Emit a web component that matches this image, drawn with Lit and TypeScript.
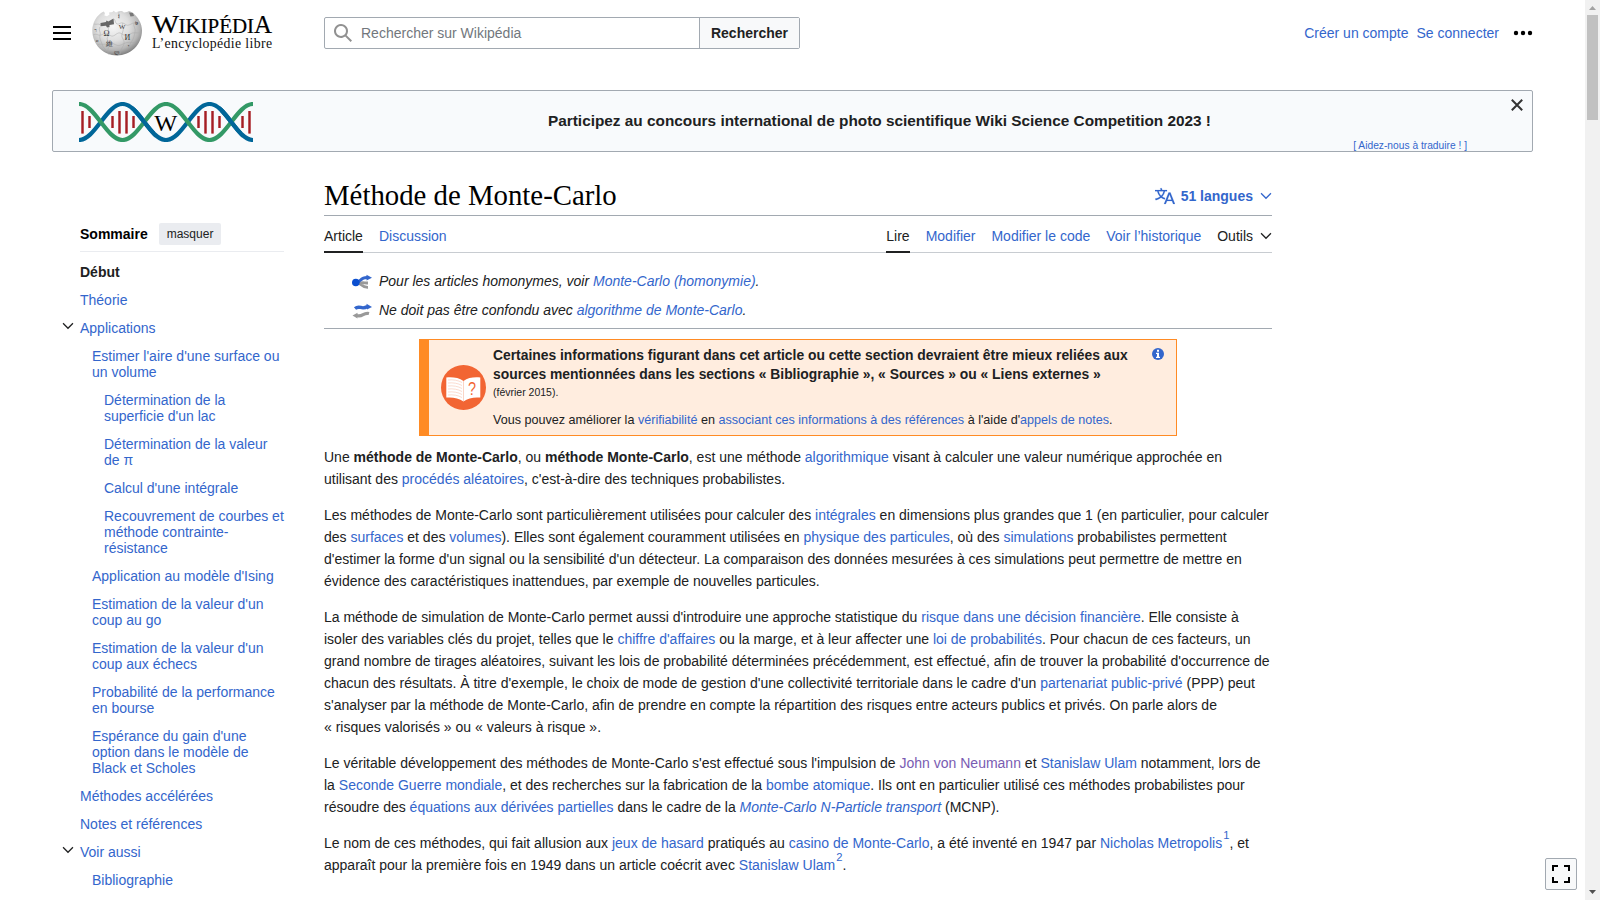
import { LitElement, html, css, svg } from "lit";
import { customElement } from "lit/decorators.js";
import { classMap } from "lit/directives/class-map.js";

type TocEntry = { label: string; level: number; open?: boolean; current?: boolean };

const TOC: TocEntry[] = [
  { label: "Début", level: 1, current: true },
  { label: "Théorie", level: 1 },
  { label: "Applications", level: 1, open: true },
  { label: "Estimer l'aire d'une surface ou un volume", level: 2 },
  { label: "Détermination de la superficie d'un lac", level: 3 },
  { label: "Détermination de la valeur de π", level: 3 },
  { label: "Calcul d'une intégrale", level: 3 },
  { label: "Recouvrement de courbes et méthode contrainte-résistance", level: 3 },
  { label: "Application au modèle d'Ising", level: 2 },
  { label: "Estimation de la valeur d'un coup au go", level: 2 },
  { label: "Estimation de la valeur d'un coup aux échecs", level: 2 },
  { label: "Probabilité de la performance en bourse", level: 2 },
  { label: "Espérance du gain d'une option dans le modèle de Black et Scholes", level: 2 },
  { label: "Méthodes accélérées", level: 1 },
  { label: "Notes et références", level: 1 },
  { label: "Voir aussi", level: 1, open: true },
  { label: "Bibliographie", level: 2 },
];

const chevron = html`<svg class="chev" viewBox="0 0 20 20" width="12" height="12">
  <path d="M17.5 4.75l-7.5 7.5-7.5-7.5L1 6.25l9 9 9-9z" fill="currentColor" /></svg>`;

const globe = html`<svg class="globe" viewBox="0 0 50 46" width="50" height="46">
  <defs>
    <radialGradient id="ball" cx="0.42" cy="0.35" r="0.65">
      <stop offset="0" stop-color="#f6f6f6" /><stop offset="0.5" stop-color="#dedede" />
      <stop offset="0.82" stop-color="#b5b5b5" /><stop offset="1" stop-color="#858585" />
    </radialGradient>
  </defs>
  <path d="M11.5 1.5 L13 3 L12.4 5.5 L15 6.3 L17.5 4.6 L17 2.6 L20.5 2 L21.5 0.8 L24 2.6 L27 1 L30 .9 L32 2.4 L35 2 L37 1 L40 2.2
    C46 6.500 50 13.500 50 20.500 C50 34.600 38.900 45.400 25 45.400 C11.100 45.400 .3 34.600 .3 20.500 C.3 12.500 4.500 5.200 11.500 1.500 Z" fill="url(#ball)" />
  <path d="M8.500 13 L14 12 L14.500 10.500 L16.300 11.500 L21.500 8.500 L22 14.200 L17.500 15 L17.500 17 L15 17.500 L14 15.700 L8.500 16.300 Z" fill="#666" />
  <path d="M37 2.500 L41 3 L42 6 L38.500 6.500 Z" fill="#777" />
  <g fill="none" stroke="#a8a8a8" stroke-width=".5">
    <path d="M2 14c3 1 4-1 6.500 1M22 9c2 2 1 4 3 5s3-2 6-1 3 3 6 2 4-3 8-2M1 25c4-2 5 1 8 0s4-3 7-1 4 3 7 1 4-3 7-1 5 2 8 0 6-1 10-1M5 35c4-2 5 0 9-1s4-2 8 0 5 2 9 0 6-2 12-1" />
    <path d="M17 17c-2 3 1 4 0 7s-3 4-1 7 1 5 0 8 1 4 1 6M31 13c-2 3 1 5 0 8s-2 5 0 8 1 6-1 9-1 4-2 6M42 13c-1 4 2 5 1 9s-1 6-3 9-2 4-3 7M8 17c-2 3 1 5 0 8s1 6 2 9 2 4 4 6M27 2c-1 3 1 4 0 7" />
  </g>
  <g fill="#333" font-family="Liberation Serif, serif" text-anchor="middle">
    <text x="14.500" y="25.500" font-size="8">Ω</text><text x="30" y="18.500" font-size="7">W</text>
    <text x="35.500" y="29.500" font-size="8">И</text><text x="17.500" y="35.500" font-size="7">維</text>
    <text x="36.500" y="38" font-size="6">י</text><text x="44" y="15" font-size="6">७</text>
    <text x="3.500" y="22" font-size="5">ר</text><text x="5" y="32" font-size="5">и</text>
    <text x="27" y="8" font-size="5">វ</text><text x="24" y="44" font-size="5">ლ</text>
  </g>
</svg>`;

const wordmark = html`<svg class="wordmark" viewBox="0 0 122 42" width="122" height="42">
  <g fill="#000" font-family="Liberation Serif, serif">
    <g stroke="#000" stroke-width=".2">
      <text x="0" y="20.500" font-size="26" textLength="27" lengthAdjust="spacingAndGlyphs">W</text>
      <text x="26.500" y="20.500" font-size="20" textLength="75.500" lengthAdjust="spacingAndGlyphs">IKIPÉDI</text>
      <text x="102" y="20.500" font-size="26" textLength="18" lengthAdjust="spacingAndGlyphs">A</text>
    </g>
    <text x="0" y="36" font-size="13.800" fill="#111" textLength="120" lengthAdjust="spacing">L’encyclopédie libre</text>
  </g>
</svg>`;

const WAVE_DOWN = "M0 2C16 2 27.500 38 43.500 38S71 2 87 2S114.500 38 130.500 38S158 2 174 2";
const WAVE_UP = "M0 38C16 38 27.500 2 43.500 2S71 38 87 38S114.500 2 130.500 2S158 38 174 38";
const RUNGS: [number, boolean][] = [
  [3.5, true], [10.5, false], [33.5, false], [40.5, true], [47.5, true], [54.5, false],
  [119.5, false], [126.5, true], [133.5, true], [140.5, false], [163.5, false], [170.5, true],
];
const dna = html`<svg class="dna" viewBox="0 0 174 40" width="174" height="40">
  <defs><clipPath id="over"><rect x="54" y="0" width="22" height="40" /><rect x="141" y="0" width="22" height="40" /></clipPath></defs>
  ${RUNGS.map(([x, tall]) => svg`<rect x=${x - 1.5} y=${tall ? 9 : 14} width="3" height=${tall ? 22.5 : 12} fill="#d9979b" />
    <rect x=${x - 1} y=${tall ? 9 : 14} width="2" height=${tall ? 22.5 : 12} fill="#a31f25" />`)}
  <g fill="none" stroke-width="4.2">
    <path d=${WAVE_UP} stroke="#069" /><path d=${WAVE_DOWN} stroke="#396" />
    <path d=${WAVE_UP} stroke="#069" clip-path="url(#over)" />
  </g>
  <text x="75.300" y="28.500" font-size="24" textLength="23" lengthAdjust="spacingAndGlyphs" font-family="Liberation Serif, serif">W</text>
</svg>`;

const book = html`<svg class="book" viewBox="0 0 45 45" width="45" height="45">
  <circle cx="22.500" cy="22.500" r="22.500" fill="#f26533" />
  <path d="M5.300 12.500C11 12 18 12.500 22.500 16C27 12.500 33 12 39.300 12.500V32.600C33 32 27 33 22.500 36.500C18 33 11 32 5.300 32.600Z" fill="#fff" />
  <path d="M22.500 16V36" stroke="#f6b8a0" stroke-width=".6" />
  <g fill="none" stroke="#f9cdbb" stroke-width=".7">
    <path d="M7 15c5-.5 10 .2 14 2.500M7 18c5-.5 10 .2 14 2.500M7 21c5-.5 10 .2 14 2.500M7 24c5-.5 10 .2 14 2.500M7 27c5-.5 10 .2 14 2.500M7 30c5-.5 10 .2 14 2.500" />
  </g>
  <text x="31" y="29.500" text-anchor="middle" font-size="18" fill="#f26533" font-family="Liberation Sans, sans-serif" textLength="8" lengthAdjust="spacingAndGlyphs">?</text>
</svg>`;

@customElement("app-root")
export class AppRoot extends LitElement {
  static styles = css`
    :host { display: flex; height: 900px; overflow: hidden; position: relative; background: #fff;
      font-family: "Liberation Sans", Arial, sans-serif; font-size: 14px; line-height: 22px; color: #202122; }
    * { box-sizing: border-box; }
    svg { display: block; flex: none; }
    a { color: #36c; text-decoration: none; }
    .visited { color: #795cb2; }
    .page { flex: 1; min-width: 0; padding: 0 52px; overflow: hidden; }
    .header { height: 66px; display: flex; align-items: center; }
    .brand { width: 272px; display: flex; align-items: center; }
    .menu { margin: 0 21px 0 1px; }
    .globe { margin-right: 10px; }
    .wordmark { overflow: visible; }
    .search { display: flex; width: 476px; height: 32px; border: 1px solid #a2a9b1; border-radius: 2px; color: #72777d; }
    .field { flex: 1; display: flex; align-items: center; gap: 8px; padding-left: 8px; }
    .go { width: 100px; border-left: 1px solid #a2a9b1; background: #f8f9fa; color: #202122; font-weight: bold;
      display: flex; align-items: center; justify-content: center; }
    .personal { margin-left: auto; display: flex; align-items: center; gap: 8px; }
    .dots { margin-left: 6px; }
    .banner { height: 62px; margin-top: 24px; border: 1px solid #a2a9b1; border-radius: 2px; background: #f8fafc;
      position: relative; display: flex; align-items: center; }
    .dna { margin: 2px 0 0 26px; }
    .slogan { flex: 1; text-align: center; font-size: 15.36px; font-weight: bold; margin-right: 26px; }
    .translate { position: absolute; right: 65px; bottom: -6px; font-size: 10.24px; }
    .close { position: absolute; right: 9px; top: 8px; }
    .columns { display: flex; }
    .toc { width: 272px; padding: 71px 40px 0 28px; line-height: 16px; }
    .tochead { display: flex; align-items: center; height: 22px; color: #000; font-weight: bold; }
    .hide { margin-left: 11px; height: 22px; padding: 3px 8px; background: #eaecf0; border-radius: 2px; font-size: 12px;
      font-weight: normal; color: #202122; }
    .rule { border-top: 1px solid #eaecf0; margin: 6px 0 6px; }
    .item { padding: 6px 0; display: flex; }
    .item .chev { margin: 0 6px 0 -18px; color: #202122; }
    .l2 { padding-left: 12px; }
    .l3 { padding-left: 24px; }
    .current { color: #202122; font-weight: bold; }
    .main { width: 948px; }
    .titlebar { height: 64px; border-bottom: 1px solid #a2a9b1; display: flex; align-items: flex-end; justify-content: space-between; }
    h1 { margin: 0; font: normal 28.8px/36px "Liberation Serif", serif; color: #000; padding-bottom: 2px; }
    .langs { display: flex; align-items: center; color: #36c; font-weight: bold; padding-bottom: 8px; }
    .langs .chev { margin-left: 7px; }
    .langs svg:first-child { margin-right: 6px; }
    .tabs { height: 37px; border-bottom: 1px solid #c8ccd1; display: flex; gap: 16px; }
    .tab { height: 37px; padding-top: 9px; display: flex; }
    .on { border-bottom: 2px solid #202122; color: #202122; }
    .push { margin-left: auto; }
    .tools { color: #202122; }
    .tools .chev { margin: 5px 0 0 7px; }
    .hatnotes { padding-top: 13px; border-bottom: 1px solid #a2a9b1; height: 76px; font-style: italic; }
    .hat { display: flex; align-items: center; height: 29px; padding-left: 28px; gap: 7px; }
    .hat svg { margin-top: 2px; }
    .notice { margin: 10px 0 0 95px; width: 758px; height: 97px; border: 1px solid #ff8b24; border-left-width: 10px;
      background: #ffeddf; display: flex; align-items: center; padding-left: 12px; }
    .body { margin-left: 7px; width: 645px; height: 95px; padding-top: 6px; font-size: 12.6px; line-height: 19px; }
    .strong { font-size: 13.86px; font-weight: bold; }
    .date { font-size: 10.5px; line-height: 16px; }
    .improve { margin-top: 11px; }
    .info { align-self: flex-start; margin: 8px 0 0 14px; }
    p { margin: 0 0 14px; }
    .prose { padding-top: 10px; }
    .prose sup { font-size: 11.2px; line-height: 0; vertical-align: 9px; padding-left: 1px; }
    .expand { position: absolute; left: 1545px; top: 858px; width: 32px; height: 32px; border: 1px solid #a2a9b1; border-radius: 2px;
      background: #f8f9fa; padding: 6px; }
    .scroll { width: 15px; background: #f1f1f1; display: flex; flex-direction: column; }
    .thumb { margin: 0 2px; height: 105px; background: #c1c1c1; }
    .scroll svg:last-child { margin-top: auto; }
  `;

  render() {
    return html`
      <div class="page">
        <header class="header">
          <div class="brand">
            <svg class="menu" viewBox="0 0 18 14" width="18" height="14"><path d="M0 0h18v2H0zM0 6h18v2H0zM0 12h18v2H0z" /></svg>
            ${globe}${wordmark}
          </div>
          <div class="search">
            <div class="field">
              <svg viewBox="0 0 20 20" width="20" height="20"><path fill="#919191" d="M12.200 13.600a7 7 0 1 1 1.400-1.400l5.400 5.400-1.400 1.400zM3 8a5 5 0 1 0 10 0A5 5 0 0 0 3 8z" /></svg>
              <span>Rechercher sur Wikipédia</span>
            </div>
            <div class="go">Rechercher</div>
          </div>
          <nav class="personal">
            <a>Créer un compte</a><a>Se connecter</a>
            <svg class="dots" viewBox="0 0 20 20" width="20" height="20"><circle cx="3" cy="10" r="2.200" /><circle cx="10" cy="10" r="2.200" /><circle cx="17" cy="10" r="2.200" /></svg>
          </nav>
        </header>
        <section class="banner">
          ${dna}
          <div class="slogan">Participez au concours international de photo scientifique Wiki Science Competition 2023 !</div>
          <a class="translate">[ Aidez-nous à traduire ! ]</a>
          <svg class="close" viewBox="0 0 12 12" width="12" height="12"><path d="M.8.8l10.400 10.400M11.200.8L.8 11.200" stroke="#333" stroke-width="2" /></svg>
        </section>
        <div class="columns">
          <aside class="toc">
            <div class="tochead">Sommaire<span class="hide">masquer</span></div>
            <div class="rule"></div>
            ${TOC.map((t) => html`<div class=${classMap({ item: true, l2: t.level === 2, l3: t.level === 3 })}>
              ${t.open ? chevron : ""}<a class=${classMap({ current: !!t.current })}>${t.label}</a></div>`)}
          </aside>
          <main class="main">
            <div class="titlebar">
              <h1>Méthode de Monte-Carlo</h1>
              <div class="langs">
                <svg viewBox="0 0 20 20" width="20" height="20"><path fill="#36c" stroke="#36c" stroke-width=".15" d="M20 18h-1.440a.61.61 0 0 1-.4-.12.81.81 0 0 1-.23-.31L17 15h-5l-1 2.540a.77.77 0 0 1-.22.3.59.59 0 0 1-.4.14H9l4.550-11.470h1.890zm-3.530-4.310L14.890 9.500a11.620 11.620 0 0 1-.39-1.240q-.09.37-.19.69l-.19.56-1.580 4.190zm-6.300-1.580a13.430 13.430 0 0 1-2.910-1.410 11.460 11.460 0 0 0 2.810-5.370H12V4H7.310a4 4 0 0 0-.2-.56C6.870 2.790 6.600 2 6.600 2l-1.470.5s.4.89.6 1.500H0v1.330h2.150A11.230 11.230 0 0 0 5 10.700a17.190 17.190 0 0 1-5 2.100q.56.82.87 1.380a23.280 23.280 0 0 0 5.220-2.510 15.640 15.640 0 0 0 3.560 1.770zM3.630 5.330h4.910a8.110 8.110 0 0 1-2.450 4.450 9.110 9.110 0 0 1-2.460-4.450z" /></svg>
                51 langues${chevron}
              </div>
            </div>
            <nav class="tabs">
              <a class="tab on">Article</a><a class="tab">Discussion</a>
              <a class="tab on push">Lire</a><a class="tab">Modifier</a><a class="tab">Modifier le code</a>
              <a class="tab">Voir l’historique</a><a class="tab tools">Outils${chevron}</a>
            </nav>
            <div class="hatnotes">
              <div class="hat">
                <svg viewBox="0 0 20 16" width="20" height="16">
                  <path d="M5 8.500C9 8.500 9 13.500 16 13.300M7 9.500C10 8 12 9 16 9" fill="none" stroke="#999" stroke-width="2.800" />
                  <path d="M4 8.500C9 8 8 3.500 15 3.500" fill="none" stroke="#36c" stroke-width="3" />
                  <path d="M14.500 .8L20 3.800L14.500 6.500z" fill="#36c" /><circle cx="3.800" cy="8.500" r="3.800" fill="#0b4fd0" />
                </svg>
                <span>Pour les articles homonymes, voir <a>Monte-Carlo (homonymie)</a>.</span>
              </div>
              <div class="hat">
                <svg viewBox="0 0 20 16" width="20" height="16">
                  <path d="M3 5.500C8 1.500 9 7.500 15.500 3.500" fill="none" stroke="#36c" stroke-width="3.400" /><path d="M14.500 .8L20 4L15 6.500z" fill="#36c" />
                  <path d="M4.500 12.500C11 14.500 11 9 17 10.500" fill="none" stroke="#999" stroke-width="3.200" /><path d="M5.500 9.800L.5 12.500L5.500 15.500z" fill="#999" />
                </svg>
                <span>Ne doit pas être confondu avec <a>algorithme de Monte-Carlo</a>.</span>
              </div>
            </div>
            <div class="notice">
              ${book}
              <div class="body">
                <div class="strong">Certaines informations figurant dans cet article ou cette section devraient être mieux reliées aux sources mentionnées dans les sections «&nbsp;Bibliographie&nbsp;», «&nbsp;Sources&nbsp;» ou «&nbsp;Liens externes&nbsp;»</div>
                <div class="date">(février 2015).</div>
                <div class="improve">Vous pouvez améliorer la <a>vérifiabilité</a> en <a>associant ces informations à des références</a> à l'aide d'<a>appels de notes</a>.</div>
              </div>
              <svg class="info" viewBox="0 0 12 12" width="12" height="12"><circle cx="6" cy="6" r="6" fill="#36c" /><path d="M5 1.800h2v2H5zM4 4.800h3v4h1V10H4V8.800h1V6H4z" fill="#fff" /></svg>
            </div>
            <article class="prose">
              <p>Une <b>méthode de Monte-Carlo</b>, ou <b>méthode Monte-Carlo</b>, est une méthode <a>algorithmique</a> visant à calculer une valeur numérique approchée en utilisant des <a>procédés aléatoires</a>, c'est-à-dire des techniques probabilistes.</p>
              <p>Les méthodes de Monte-Carlo sont particulièrement utilisées pour calculer des <a>intégrales</a> en dimensions plus grandes que 1 (en particulier, pour calculer des <a>surfaces</a> et des <a>volumes</a>). Elles sont également couramment utilisées en <a>physique des particules</a>, où des <a>simulations</a> probabilistes permettent d'estimer la forme d'un signal ou la sensibilité d'un détecteur. La comparaison des données mesurées à ces simulations peut permettre de mettre en évidence des caractéristiques inattendues, par exemple de nouvelles particules.</p>
              <p>La méthode de simulation de Monte-Carlo permet aussi d'introduire une approche statistique du <a>risque dans une décision financière</a>. Elle consiste à isoler des variables clés du projet, telles que le <a>chiffre d'affaires</a> ou la marge, et à leur affecter une <a>loi de probabilités</a>. Pour chacun de ces facteurs, un grand nombre de tirages aléatoires, suivant les lois de probabilité déterminées précédemment, est effectué, afin de trouver la probabilité d'occurrence de chacun des résultats. À titre d'exemple, le choix de mode de gestion d'une collectivité territoriale dans le cadre d'un <a>partenariat public-privé</a> (PPP) peut s'analyser par la méthode de Monte-Carlo, afin de prendre en compte la répartition des risques entre acteurs publics et privés. On parle alors de «&nbsp;risques valorisés&nbsp;» ou «&nbsp;valeurs à risque&nbsp;».</p>
              <p>Le véritable développement des méthodes de Monte-Carlo s'est effectué sous l'impulsion de <a class="visited">John von Neumann</a> et <a>Stanislaw Ulam</a> notamment, lors de la <a>Seconde Guerre mondiale</a>, et des recherches sur la fabrication de la <a>bombe atomique</a>. Ils ont en particulier utilisé ces méthodes probabilistes pour résoudre des <a>équations aux dérivées partielles</a> dans le cadre de la <a><i>Monte-Carlo N-Particle transport</i></a> (MCNP).</p>
              <p>Le nom de ces méthodes, qui fait allusion aux <a>jeux de hasard</a> pratiqués au <a>casino de Monte-Carlo</a>, a été inventé en 1947 par <a>Nicholas Metropolis</a><sup><a>1</a></sup>, et apparaît pour la première fois en 1949 dans un article coécrit avec <a>Stanislaw Ulam</a><sup><a>2</a></sup>.</p>
            </article>
          </main>
        </div>
      </div>
      <div class="scroll">
        <svg viewBox="0 0 15 15" width="15" height="15"><path d="M4 10L7.500 6L11 10z" fill="#a3a3a3" /></svg>
        <div class="thumb"></div>
        <svg viewBox="0 0 15 15" width="15" height="15"><path d="M4 5L11 5L7.500 9z" fill="#505050" /></svg>
      </div>
      <div class="expand"><svg viewBox="0 0 18 18" width="18" height="18"><path d="M0 0h6v2H2v4H0zM12 0h6v6h-2V2h-4zM0 12h2v4h4v2H0zM16 12h2v6h-6v-2h4z" /></svg></div>
    `;
  }
}
